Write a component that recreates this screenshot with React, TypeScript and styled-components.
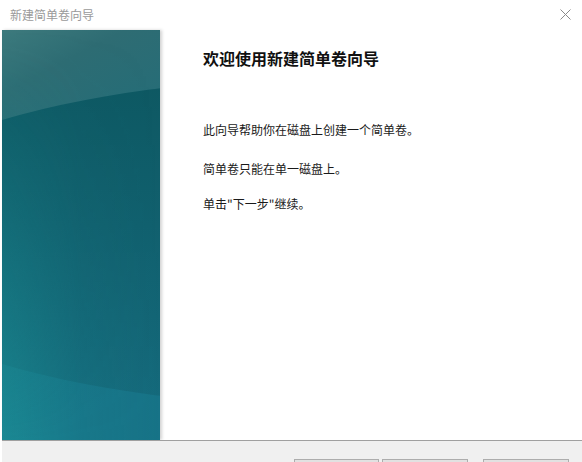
import React from 'react';
import styled, { createGlobalStyle } from 'styled-components';

const GlobalStyle = createGlobalStyle`
  html, body {
    margin: 0;
    padding: 0;
    width: 582px;
    height: 462px;
    overflow: hidden;
    background: #ffffff;
  }
  * {
    box-sizing: border-box;
  }
`;

// Fenêtre de l'assistant
const Window = styled.div`
  width: 582px;
  height: 462px;
  display: flex;
  flex-direction: column;
  padding-left: 2px;
  background: #ffffff;
  font-family: "Noto Sans CJK SC", "Noto Sans", sans-serif;
`;

const TitleBar = styled.div`
  height: 30px;
  flex: none;
  display: flex;
  align-items: center;
  justify-content: space-between;
  padding: 0 10px 2px 8px;
  background: #ffffff;
`;

const TitleText = styled.span`
  font-size: 12px;
  color: #9a9a9a;
`;

const CloseButton = styled.button`
  width: 14px;
  height: 14px;
  padding: 0;
  border: none;
  background: transparent;
  display: flex;
  align-items: center;
  justify-content: center;
`;

const Body = styled.div`
  flex: none;
  height: 410px;
  display: flex;
`;

const SidePanel = styled.div`
  width: 158px;
  flex: none;
  box-shadow: 2px 0 3px rgba(0, 0, 0, 0.18);
  svg {
    display: block;
  }
`;

const Content = styled.div`
  flex: 1;
  padding: 15px 20px 0 43px;
`;

const Heading = styled.h1`
  margin: 0 0 50px 0;
  font-size: 16px;
  font-weight: 700;
  line-height: 26px;
  color: #111111;
`;

const Paragraph = styled.p<{ gap: number }>`
  margin: 0 0 ${props => props.gap}px 0;
  font-size: 12px;
  line-height: 18px;
  color: #1a1a1a;
`;

const Footer = styled.div`
  flex: 1;
  border-top: 1px solid #a0a0a0;
  background: #f0f0f0;
  display: flex;
  justify-content: flex-end;
  align-items: flex-start;
  padding: 18px 13px 0 0;
`;

const ButtonGroup = styled.div`
  display: flex;
  gap: 3px;
  margin-right: 15px;
`;

// Les libellés sont sous le bord de la fenêtre, seul le haut des boutons dépasse
const WizardButton = styled.button<{ w: number }>`
  width: ${props => props.w}px;
  height: 23px;
  border: 1px solid #adadad;
  background: #e1e1e1;
`;

// Illustration du panneau latéral
function PanelArt() {
  return (
    <svg width="158" height="410" viewBox="0 0 158 410">
      <defs>
        <linearGradient id="base" x1="0" y1="0" x2="0.2" y2="1">
          <stop offset="0" stopColor="#3d7a7d" />
          <stop offset="0.15" stopColor="#2e6c73" />
          <stop offset="0.75" stopColor="#166f80" />
          <stop offset="1" stopColor="#177387" />
        </linearGradient>
        <linearGradient id="glow" x1="0" y1="0" x2="1" y2="0">
          <stop offset="0" stopColor="#1fa3a3" stopOpacity="0.45" />
          <stop offset="0.5" stopColor="#1fa3a3" stopOpacity="0.1" />
          <stop offset="1" stopColor="#1fa3a3" stopOpacity="0" />
        </linearGradient>
        <linearGradient id="glowFade" x1="0" y1="0" x2="0" y2="1">
          <stop offset="0" stopColor="#fff" stopOpacity="0" />
          <stop offset="0.45" stopColor="#fff" stopOpacity="0.4" />
          <stop offset="1" stopColor="#fff" stopOpacity="1" />
        </linearGradient>
        <mask id="glowMask">
          <rect width="158" height="410" fill="url(#glowFade)" />
        </mask>
        <linearGradient id="blob" x1="0" y1="0" x2="0" y2="1">
          <stop offset="0" stopColor="#0e5862" />
          <stop offset="0.45" stopColor="#11606e" />
          <stop offset="1" stopColor="#156a7c" />
        </linearGradient>
      </defs>
      <rect width="158" height="410" fill="url(#base)" />
      <ellipse cx="343" cy="212" rx="510" ry="165" fill="url(#blob)" />
      <rect width="158" height="410" fill="url(#glow)" mask="url(#glowMask)" />
    </svg>
  );
}

function CloseIcon() {
  return (
    <svg width="11" height="11" viewBox="0 0 11 11">
      <path d="M0.5 0.5 L10.5 10.5 M10.5 0.5 L0.5 10.5" stroke="#8a8a8a" strokeWidth="1" fill="none" />
    </svg>
  );
}

export default function App() {
  return (
    <>
      <GlobalStyle />
      <Window>
        <TitleBar>
          <TitleText>新建简单卷向导</TitleText>
          <CloseButton aria-label="关闭">
            <CloseIcon />
          </CloseButton>
        </TitleBar>
        <Body>
          <SidePanel>
            <PanelArt />
          </SidePanel>
          <Content>
            <Heading>欢迎使用新建简单卷向导</Heading>
            <Paragraph gap={21}>此向导帮助你在磁盘上创建一个简单卷。</Paragraph>
            <Paragraph gap={17}>简单卷只能在单一磁盘上。</Paragraph>
            <Paragraph gap={0}>单击"下一步"继续。</Paragraph>
          </Content>
        </Body>
        <Footer>
          <ButtonGroup>
            <WizardButton w={85} aria-label="上一步" disabled />
            <WizardButton w={86} aria-label="下一步" />
          </ButtonGroup>
          <WizardButton w={86} aria-label="取消" />
        </Footer>
      </Window>
    </>
  );
}
